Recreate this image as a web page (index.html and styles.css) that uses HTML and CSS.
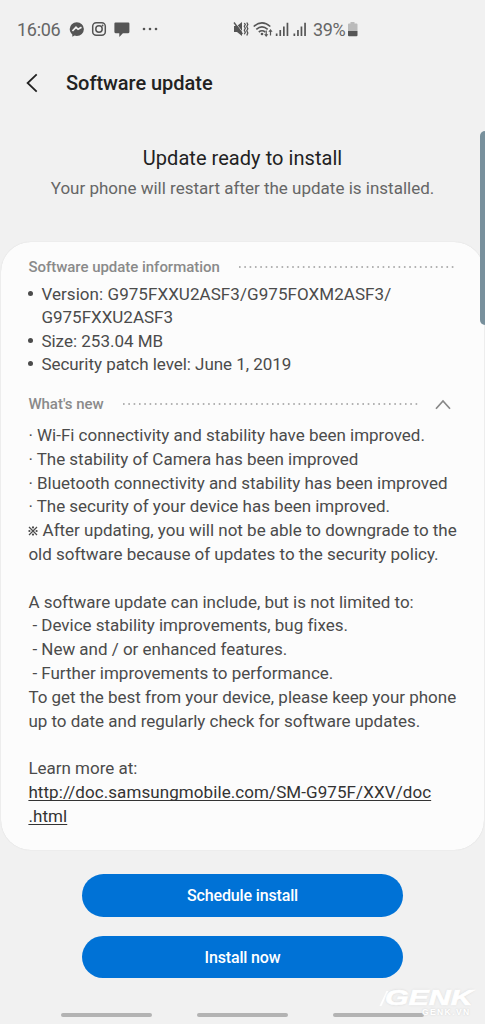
FILE: index.html
```html
<!DOCTYPE html>
<html lang="en">
<head>
<meta charset="utf-8">
<title>Software update</title>
<link rel="stylesheet" href="styles.css">
</head>
<body>
<div class="screen">
  <div class="status">
    <span class="clock">16:06</span>
    <svg class="notif" width="92" height="20" viewBox="0 0 92 20" fill="#555">
      <path d="M7.800 2.300a7.100 6.800 0 0 0-7.100 6.800c0 2.200 1 4.100 2.600 5.300v2.400l2.300-1.200c.7.200 1.400.3 2.200.3a7.100 6.800 0 0 0 0-13.600z"/>
      <path d="M3.400 11 7 7.300l2.100 2 3.400-2" fill="none" stroke="#f1f1f1" stroke-width="1.700"/>
      <rect x="23.700" y="2.700" width="12.600" height="12.600" rx="3.500" fill="none" stroke="#555" stroke-width="1.500"/>
      <circle cx="30" cy="9" r="3.200" fill="none" stroke="#555" stroke-width="1.500"/>
      <circle cx="33.600" cy="5.500" r=".9"/>
      <path d="M46.500 2.400h12.800a1.100 1.100 0 0 1 1.100 1.100v8.600a1.100 1.100 0 0 1-1.100 1.100h-5.400l-3.600 3.700v-3.700h-3.800a1.100 1.100 0 0 1-1.100-1.100V3.500a1.100 1.100 0 0 1 1.100-1.100z"/>
      <circle cx="75" cy="9" r="1.300"/><circle cx="81" cy="9" r="1.300"/><circle cx="87" cy="9" r="1.300"/>
    </svg>
    <svg class="signals" width="76" height="20" viewBox="0 0 76 20" fill="#555">
      <path d="M1 6h3L9 2v14l-5-4H1z"/>
      <path d="M2 2.100 10.500 13.500" stroke="#f1f1f1" stroke-width=".8"/>
      <path d="M1 2.500 9.400 14" stroke="#555" stroke-width="1.400"/>
      <path d="m11.300 3 1 1.500-1 1.800 1 2-1 2 1 2-1 2M13.800 2.500l1 2-1 2 1 2.200-1 2 1 2.200-1 2.600" fill="none" stroke="#555" stroke-width="1.300"/>
      <g fill="none" stroke="#555" stroke-width="1.600"><path d="M20.700 6.500q8.300-7.200 16.600 0M23.300 9.300q5.700-4.700 11.400 0M25.800 12q3.200-2.500 6.400 0"/></g>
      <circle cx="29" cy="14" r="1.300"/>
      <path d="M32.600 10.500h1.200v3.700h1.500l-2.100 2.700-2.100-2.700h1.500zM36.900 15.500h1.200v-3.800h1.500L37.500 9l-2.100 2.700h1.500z"/>
      <path d="M42.800 13.500h1.700V16h-1.700zM46.400 10h1.700v6h-1.700zM50 6.500h1.700V16H50zM53.600 2.800h1.700V16h-1.700zM60.500 13.500h1.700V16h-1.700zM64.100 10h1.700v6h-1.700zM67.600 6.500h1.700V16h-1.700zM71.200 2.800h1.700V16h-1.700z"/>
    </svg>
    <span class="percent">39%</span>
    <svg class="battery" width="12" height="18" viewBox="0 0 12 18"><path d="M3.500 1h4v1.500h2a1 1 0 0 1 1 1V10H1V3.500a1 1 0 0 1 1-1h1.500z" fill="#bbb"/><path d="M1 10h9.500v4.200a1 1 0 0 1-1 1H2a1 1 0 0 1-1-1z" fill="#555"/></svg>
  </div>

  <header class="header">
    <svg class="back" width="12" height="20" viewBox="0 0 12 20"><path d="M10.700 1.300 1.600 10l9.100 8.700" fill="none" stroke="#222" stroke-width="1.800"/></svg>
    <h1 class="title">Software update</h1>
  </header>

  <section class="intro">
    <h2 class="ready">Update ready to install</h2>
    <p class="restart">Your phone will restart after the update is installed.</p>
  </section>

  <main class="card">
    <div class="section-head">
      <span>Software update information</span>
      <svg class="dots" width="216" height="2"><path d="M0 1h216" stroke="#999" stroke-width="1.600" stroke-dasharray="1.600 3.720"/></svg>
    </div>
    <ul class="facts">
      <li><span class="version">Version: G975FXXU2ASF3/G975FOXM2ASF3/</span><br>G975FXXU2ASF3</li>
      <li>Size: 253.04 MB</li>
      <li class="patch">Security patch level: June 1, 2019</li>
    </ul>
    <div class="section-head whats-new">
      <span>What's new</span>
      <svg class="dots" width="297" height="2"><path d="M0 1h297" stroke="#999" stroke-width="1.600" stroke-dasharray="1.600 3.720"/></svg>
      <svg class="chevron" width="16" height="11" viewBox="0 0 16 11"><path d="m1 9.700 7-7.800 7 7.800" fill="none" stroke="#888" stroke-width="1.700"/></svg>
    </div>
    <div class="notes">
      <p>· Wi-Fi connectivity and stability have been improved.</p>
      <p>· The stability of Camera has been improved</p>
      <p>· Bluetooth connectivity and stability has been improved</p>
      <p>· The security of your device has been improved.</p>
      <p><svg class="mark" width="10" height="10" viewBox="0 0 10 10"><path d="m1 1 8 8M9 1 1 9" stroke="#4b4b4b" stroke-width="1.200"/><g fill="#4b4b4b"><circle cx="5" cy="1.400" r="1.100"/><circle cx="5" cy="8.600" r="1.100"/><circle cx="1.400" cy="5" r="1.100"/><circle cx="8.600" cy="5" r="1.100"/></g></svg> After updating, you will not be able to downgrade to the</p>
      <p>old software because of updates to the security policy.</p>
      <p class="gap">A software update can include, but is not limited to:</p>
      <p class="dash">- Device stability improvements, bug fixes.</p>
      <p class="dash">- New and / or enhanced features.</p>
      <p class="dash">- Further improvements to performance.</p>
      <p>To get the best from your device, please keep your phone</p>
      <p>up to date and regularly check for software updates.</p>
      <p class="gap">Learn more at:</p>
      <a class="link" href="#">http://doc.samsungmobile.com/SM-G975F/XXV/doc<br>.html</a>
    </div>
  </main>

  <div class="actions">
    <button class="action">Schedule install</button>
    <button class="action">Install now</button>
  </div>

  <nav class="nav"><span class="hint"></span><span class="hint"></span><span class="hint"></span></nav>

  <div class="edge-handle"></div>
  <div class="watermark"><span class="slash"></span><span class="brand">GENK</span><span class="site">GENK.VN</span></div>
</div>
</body>
</html>
```
FILE: styles.css
```css
* { box-sizing: border-box; }
body { margin: 0; background: #f1f1f1; font-family: Roboto, "Liberation Sans", sans-serif; color: #4b4b4b; }
h1, h2, p, ul { margin: 0; padding: 0; }
svg { display: block; flex: none; }
.screen { position: relative; width: 485px; height: 1024px; overflow: hidden; display: flex; flex-direction: column; white-space: nowrap; }
.status { height: 58px; padding-left: 17px; display: flex; align-items: center; font-size: 18px; color: #666; }
.clock { width: 52px; letter-spacing: -.3px; }
.notif, .signals, .battery { margin-top: 2px; }
.signals { margin-left: 72px; }
.percent { margin-left: 4px; width: 34px; letter-spacing: -.4px; }
.battery { margin-left: 0; }
.header { height: 50px; padding-left: 26px; display: flex; align-items: center; }
.title { margin-left: 28px; font-size: 20px; font-weight: 500; letter-spacing: -.04px; color: #222; }
.intro { height: 134px; padding-top: 38px; text-align: center; }
.ready { font-size: 20px; line-height: 24px; font-weight: 400; letter-spacing: .05px; color: #222; }
.restart { margin-top: 6px; font-size: 17px; line-height: 24px; color: #666; }
.card { height: 608px; margin: 0 1px; padding: 14px 0 0 27.400px; border-radius: 30px; background: #fcfcfc; box-shadow: 0 0 1px #ccc; font-size: 17px; line-height: 23.800px; }
.section-head { height: 24px; display: flex; align-items: center; font-size: 15px; font-weight: 500; letter-spacing: -.03px; color: #8a8a8a; }
.dots { margin: -2px 0 0 19.600px; }
.facts { margin-top: 2.500px; list-style: none; }
.facts li { position: relative; padding-left: 13px; line-height: 23.500px; }
.facts li::before { content: ""; position: absolute; left: 0; top: 8px; width: 5px; height: 5px; border-radius: 50%; background: #4b4b4b; }
.version { letter-spacing: .06px; }
.facts .patch { letter-spacing: -.04px; }
.whats-new { margin-top: 16.500px; }
.chevron { margin: -1px 0 0 15px; }
.notes { margin-top: 7px; letter-spacing: -.015px; }
.notes p { height: 23.800px; }
.notes .gap { margin-top: 23.800px; }
.dash { padding-left: 4px; }
.mark { display: inline-block; }
.link { display: block; letter-spacing: .08px; color: #333; text-decoration: underline; text-decoration-thickness: 1px; text-underline-offset: 2px; text-decoration-skip-ink: none; }
.actions { margin-top: 24px; display: flex; flex-direction: column; align-items: center; gap: 19px; }
.action { width: 321px; height: 42.500px; padding: 1px 0 0; border: 0; border-radius: 22px; background: #0072d6; color: #fff; font: 500 16px Roboto, sans-serif; letter-spacing: -.15px; }
.nav { margin-top: 35px; padding-left: 61px; display: flex; gap: 45px; }
.hint { width: 91px; height: 4px; border-radius: 2px; background: #b3b3b3; }
.edge-handle { position: absolute; left: 480px; top: 131px; width: 10px; height: 194px; border-radius: 5px; background: #78909c; }
.watermark { position: absolute; left: 380px; top: 988px; width: 100px; height: 32px; color: #fff; font-family: "Liberation Sans", sans-serif; font-weight: 700; text-shadow: 0 0 2px #ccc; }
.slash { position: absolute; left: 3px; top: 3px; width: 2px; height: 15px; background: #fff; transform: skewX(-25deg); }
.brand { position: absolute; left: 5px; top: 1px; font-size: 22px; line-height: 17px; font-style: italic; -webkit-text-stroke: .7px #fff; transform: scaleX(1.380); transform-origin: left; }
.site { position: absolute; left: 42px; top: 20px; font-size: 8.500px; line-height: 9px; letter-spacing: 1.400px; }
```
